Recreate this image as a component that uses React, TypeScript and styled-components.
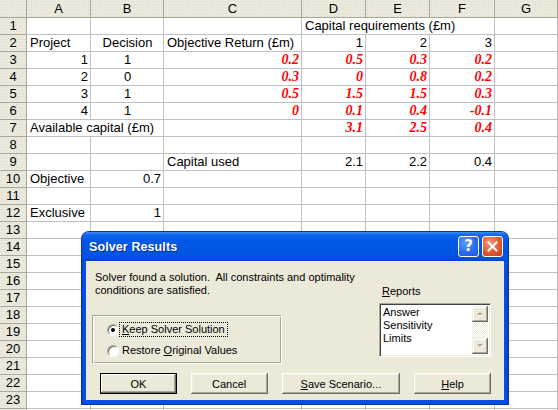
import React from 'react';
import styled, { createGlobalStyle, css } from 'styled-components';

const GlobalStyle = createGlobalStyle`
  html, body { margin: 0; padding: 0; background: #fff; overflow: hidden; }
  * { box-sizing: border-box; }
`;

const Sheet = styled.div`
  position: relative;
  width: 558px;
  height: 410px;
  overflow: hidden;
  background: #fff;
`;

const Grid = styled.div`
  display: grid;
  grid-template-columns: 27px 64px 73px 138px 64px 64px 65px 1fr;
  grid-template-rows: 18px repeat(24, 17px);
  font-family: "Liberation Sans", Arial, sans-serif;
  font-size: 13px;
  color: #000;
`;

const HeaderCell = styled.div`
  background-color: #ebe9dc;
  background-image: radial-gradient(#dedbcb 0.6px, transparent 0.8px);
  background-size: 3px 3px;
  border-right: 1px solid #aca899;
  border-bottom: 1px solid #aca899;
  display: flex;
  align-items: center;
  justify-content: center;
  line-height: 16px;
  white-space: nowrap;
`;

type Align = 'left' | 'right' | 'center';

const Cell = styled.div<{ $align: Align; $red?: boolean; $span: number }>`
  grid-column: span ${(p) => p.$span};
  border-right: 1px solid #c0c0c0;
  border-bottom: 1px solid #c0c0c0;
  padding: 0 2px 0 3px;
  line-height: 16px;
  white-space: nowrap;
  overflow: hidden;
  text-align: ${(p) => p.$align};
  ${(p) =>
    p.$red &&
    css`
      color: #ff0000;
      font-family: "Liberation Serif", "Times New Roman", serif;
      font-size: 14px;
      font-weight: bold;
      font-style: italic;
    `}
`;

type CellData = { t?: string; a?: Align; red?: boolean; span?: number };

const E: CellData = {};
const L = (t: string, span = 1): CellData => ({ t, a: 'left', span });
const Rt = (t: string): CellData => ({ t, a: 'right' });
const C = (t: string): CellData => ({ t, a: 'center' });
const Red = (t: string): CellData => ({ t, a: 'right', red: true });

const data: CellData[][] = [
  [E, E, E, L('Capital requirements (£m)', 3), E],
  [L('Project'), C('Decision'), L('Objective Return (£m)'), Rt('1'), Rt('2'), Rt('3'), E],
  [Rt('1'), C('1'), Red('0.2'), Red('0.5'), Red('0.3'), Red('0.2'), E],
  [Rt('2'), C('0'), Red('0.3'), Red('0'), Red('0.8'), Red('0.2'), E],
  [Rt('3'), C('1'), Red('0.5'), Red('1.5'), Red('1.5'), Red('0.3'), E],
  [Rt('4'), C('1'), Red('0'), Red('0.1'), Red('0.4'), Red('-0.1'), E],
  [L('Available capital (£m)', 2), E, Red('3.1'), Red('2.5'), Red('0.4'), E],
  [E, E, E, E, E, E, E],
  [E, E, L('Capital used'), Rt('2.1'), Rt('2.2'), Rt('0.4'), E],
  [L('Objective'), Rt('0.7'), E, E, E, E, E],
  [E, E, E, E, E, E, E],
  [L('Exclusive'), Rt('1'), E, E, E, E, E],
];

const TOTAL_ROWS = 24;
const VISIBLE_LABEL_ROWS = 23;
const colLetters = ['A', 'B', 'C', 'D', 'E', 'F', 'G'];

/* ---------- Dialog ---------- */

const Dialog = styled.div`
  position: absolute;
  left: 82px;
  top: 232px;
  width: 426px;
  height: 172px;
  border-radius: 7px 7px 0 0;
  background: linear-gradient(90deg, #0a3fd0 0px, #0550e0 2px, #0550e0 calc(100% - 2px), #0a3fd0 100%);
  display: flex;
  flex-direction: column;
  font-family: "Liberation Sans", Tahoma, sans-serif;
  font-size: 11px;
  color: #000;
  box-shadow: 0 0 0 1px #0831b8;
`;

const TitleBar = styled.div`
  height: 29px;
  flex: none;
  display: flex;
  align-items: center;
  padding: 0 5px 0 7px;
  border-radius: 7px 7px 0 0;
  background: linear-gradient(
    180deg,
    #3d8ff8 0%,
    #0f66ec 10%,
    #0059e6 30%,
    #0055e3 70%,
    #0052df 88%,
    #0043cc 100%
  );
`;

const TitleText = styled.div`
  flex: 1;
  color: #fff;
  font-family: "Liberation Sans", sans-serif;
  font-weight: bold;
  font-size: 12.5px;
  text-shadow: 1px 1px 0 #0a2a8c;
  letter-spacing: 0.1px;
`;

const TitleButtons = styled.div`
  display: flex;
  gap: 3px;
`;

const CapButton = styled.div<{ $kind: 'help' | 'close' }>`
  width: 21px;
  height: 21px;
  border: 1px solid #fff;
  border-radius: 3px;
  display: flex;
  align-items: center;
  justify-content: center;
  color: #fff;
  font-family: "DejaVu Sans", sans-serif;
  font-weight: bold;
  font-size: 15px;
  line-height: 1;
  background: ${(p) =>
    p.$kind === 'help'
      ? 'radial-gradient(circle at 35% 30%, #5b9bff 0%, #2a6cf1 55%, #1a55d8 100%)'
      : 'radial-gradient(circle at 35% 30%, #f19a7c 0%, #e2582f 55%, #c43d18 100%)'};
`;

const Body = styled.div`
  flex: 1;
  margin: 0 4px 4px;
  background: #ece9d8;
  display: grid;
  grid-template-columns: 287px 112px;
  grid-template-rows: auto auto;
  align-content: start;
  padding-left: 6px;
`;

const LeftCol = styled.div`
  display: flex;
  flex-direction: column;
`;

const Message = styled.div`
  margin: 10px 0 0 3px;
  line-height: 13px;
  white-space: nowrap;
`;

const GroupBox = styled.div`
  margin-top: 18px;
  width: 190px;
  height: 49px;
  border: 1px solid;
  border-color: #aca899 #fff #fff #aca899;
  box-shadow: inset 1px 1px #fff, inset -1px -1px #aca899;
  padding: 3px 0 0 14px;
  display: flex;
  flex-direction: column;
`;

const RadioRow = styled.div`
  height: 21px;
  display: flex;
  align-items: center;
  gap: 1px;
`;

const Radio = styled.div<{ $checked?: boolean }>`
  width: 12px;
  height: 12px;
  border-radius: 50%;
  background: #fff;
  border: 1px solid;
  border-color: #aca899 #fff #fff #aca899;
  box-shadow: inset 1px 1px #716f64;
  display: flex;
  align-items: center;
  justify-content: center;
  &::after {
    content: '';
    width: 4px;
    height: 4px;
    border-radius: 50%;
    background: ${(p) => (p.$checked ? '#000' : 'transparent')};
  }
`;

const RadioLabel = styled.span<{ $focus?: boolean }>`
  padding: 0 2px 0 2px;
  line-height: 13px;
  white-space: nowrap;
  outline: ${(p) => (p.$focus ? '1px dotted #000' : 'none')};
`;

const RightCol = styled.div`
  margin-top: 24px;
  display: flex;
  flex-direction: column;
`;

const ReportsLabel = styled.div`
  line-height: 13px;
  padding-left: 3px;
`;

const ListBox = styled.div`
  margin-top: 5px;
  width: 112px;
  height: 54px;
  background: #fff;
  border: 1px solid;
  border-color: #aca899 #fff #fff #aca899;
  box-shadow: inset 1px 1px #404040, inset -1px -1px #f1efe2;
  padding: 2px 2px 2px 2px;
  display: flex;
`;

const ListItems = styled.div`
  flex: 1;
  padding-left: 1px;
  line-height: 13px;
`;

const ScrollBar = styled.div`
  width: 16px;
  display: flex;
  flex-direction: column;
  background-color: #f4f3ee;
  background-image: repeating-conic-gradient(#ece9d8 0 25%, #fff 0 50%);
  background-size: 2px 2px;
  justify-content: space-between;
`;

const ArrowButton = styled.div`
  width: 16px;
  height: 16px;
  background: #ece9d8;
  box-shadow: inset -1px -1px #716f64, inset 1px 1px #f1efe2, inset -2px -2px #aca899, inset 2px 2px #fff;
  display: flex;
  align-items: center;
  justify-content: center;
`;

const ButtonRow = styled.div`
  grid-column: 1 / -1;
  display: flex;
  gap: 14px;
  margin-top: 9px;
  padding-left: 8px;
`;

const Button = styled.div<{ $w: number; $default?: boolean }>`
  width: ${(p) => p.$w}px;
  height: 21px;
  background: #ece9d8;
  display: flex;
  align-items: center;
  justify-content: center;
  white-space: nowrap;
  box-shadow: inset -1px -1px #716f64, inset 1px 1px #fff, inset -2px -2px #aca899, inset 2px 2px #f1efe2;
  ${(p) =>
    p.$default &&
    css`
      border: 1px solid #000;
    `}
`;

const Arrow: React.FC<{ down?: boolean }> = ({ down }) => (
  <svg width="7" height="5" viewBox="0 0 7 5">
    {down ? (
      <>
        <polygon points="1,1 7,1 4,4" fill="#fff" />
        <polygon points="0,0 6,0 3,3" fill="#aca899" />
      </>
    ) : (
      <>
        <polygon points="4,1 7,4 1,4" fill="#fff" />
        <polygon points="3,0 6,3 0,3" fill="#aca899" />
      </>
    )}
  </svg>
);

export default function App() {
  const rows: React.ReactNode[] = [];
  for (let r = 1; r <= TOTAL_ROWS; r++) {
    const cells = data[r - 1] ?? [E, E, E, E, E, E, E];
    rows.push(<HeaderCell key={`h${r}`}>{r <= VISIBLE_LABEL_ROWS ? r : ''}</HeaderCell>);
    cells.forEach((c, i) => {
      rows.push(
        <Cell key={`c${r}-${i}`} $align={c.a ?? 'left'} $red={c.red} $span={c.span ?? 1}>
          {c.t ?? ''}
        </Cell>
      );
    });
  }

  return (
    <>
      <GlobalStyle />
      <Sheet>
        <Grid>
          <HeaderCell />
          {colLetters.map((l) => (
            <HeaderCell key={l}>{l}</HeaderCell>
          ))}
          {rows}
        </Grid>

        <Dialog>
          <TitleBar>
            <TitleText>Solver Results</TitleText>
            <TitleButtons>
              <CapButton $kind="help">?</CapButton>
              <CapButton $kind="close">
                <svg width="11" height="11" viewBox="0 0 11 11">
                  <path d="M1.5 1.5 L9.5 9.5 M9.5 1.5 L1.5 9.5" stroke="#fff" strokeWidth="2" strokeLinecap="square" />
                </svg>
              </CapButton>
            </TitleButtons>
          </TitleBar>
          <Body>
            <LeftCol>
              <Message>
                Solver found a solution.&nbsp; All constraints and optimality
                <br />
                conditions are satisfied.
              </Message>
              <GroupBox>
                <RadioRow>
                  <Radio $checked />
                  <RadioLabel $focus>
                    <u>K</u>eep Solver Solution
                  </RadioLabel>
                </RadioRow>
                <RadioRow>
                  <Radio />
                  <RadioLabel>
                    Restore <u>O</u>riginal Values
                  </RadioLabel>
                </RadioRow>
              </GroupBox>
            </LeftCol>
            <RightCol>
              <ReportsLabel>
                <u>R</u>eports
              </ReportsLabel>
              <ListBox>
                <ListItems>
                  Answer
                  <br />
                  Sensitivity
                  <br />
                  Limits
                </ListItems>
                <ScrollBar>
                  <ArrowButton>
                    <Arrow />
                  </ArrowButton>
                  <ArrowButton>
                    <Arrow down />
                  </ArrowButton>
                </ScrollBar>
              </ListBox>
            </RightCol>
            <ButtonRow>
              <Button $w={77} $default>
                OK
              </Button>
              <Button $w={77}>Cancel</Button>
              <Button $w={119}>
                <u>S</u>ave Scenario...
              </Button>
              <Button $w={77}>
                <u>H</u>elp
              </Button>
            </ButtonRow>
          </Body>
        </Dialog>
      </Sheet>
    </>
  );
}
